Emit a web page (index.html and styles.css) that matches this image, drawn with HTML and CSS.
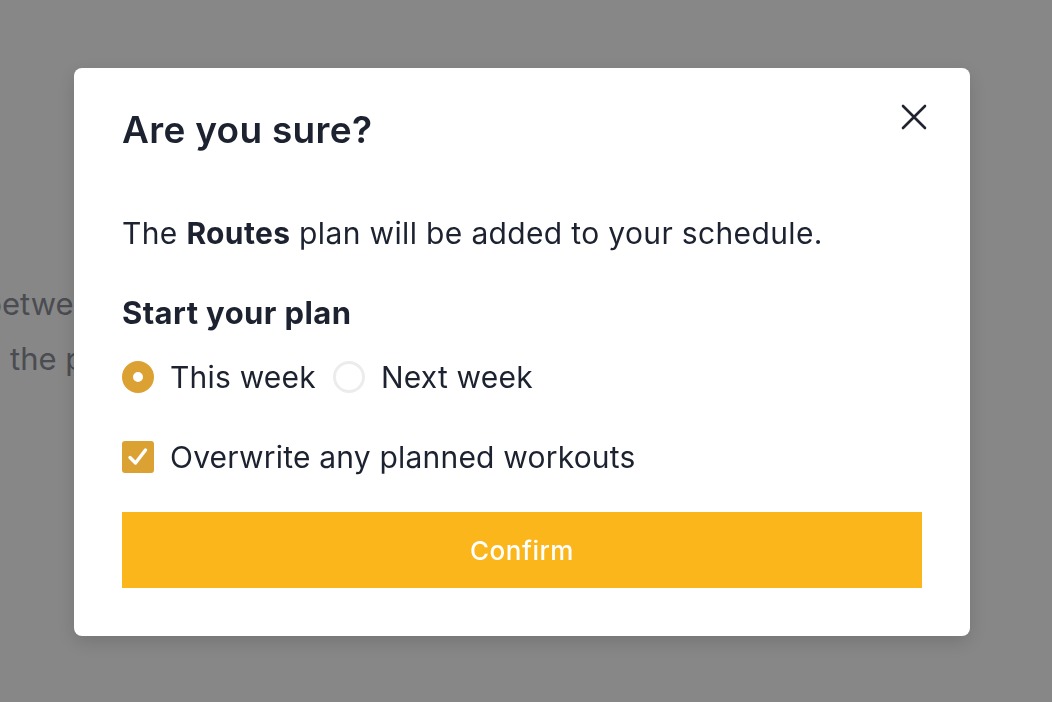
FILE: index.html
```html
<!DOCTYPE html>
<html lang="en">
<head>
    <meta charset="UTF-8">
    <title>Are you sure?</title>
    <link rel="stylesheet" href="styles.css">
</head>
<body>
    <!-- page behind the dialog -->
    <div class="page">
        <p class="page-line first">between</p>
        <p class="page-line">the plan</p>
    </div>

    <div class="overlay">
        <div class="modal">
            <div class="modal-head">
                <h2>Are you sure?</h2>
                <button class="close-btn" aria-label="Close">
                    <svg width="26" height="26" viewBox="0 0 26 26">
                        <path d="M2 2 L24 24 M24 2 L2 24" stroke="#1f2430" stroke-width="2.6" stroke-linecap="round"/>
                    </svg>
                </button>
            </div>

            <p class="summary">The <strong>Routes</strong> plan will be added to your schedule.</p>

            <h3>Start your plan</h3>
            <div class="radio-row">
                <label class="option">
                    <span class="radio checked"></span>
                    This week
                </label>
                <label class="option">
                    <span class="radio"></span>
                    Next week
                </label>
            </div>

            <label class="option check-row">
                <span class="checkbox">
                    <svg width="24" height="24" viewBox="0 0 24 24">
                        <path d="M4 12.5 L9.5 18 L19.5 5" fill="none" stroke="#fff" stroke-width="3.4" stroke-linecap="round" stroke-linejoin="round"/>
                    </svg>
                </span>
                Overwrite any planned workouts
            </label>

            <button class="confirm-btn">Confirm</button>
        </div>
    </div>
</body>
</html>
```

FILE: styles.css
```css
body {
    margin: 0;
    font-family: Inter, "Noto Sans", sans-serif;
    color: #1d2230;
    background: #fff;
    overflow: hidden;
}
.page {
    padding-top: 276px;
}
.page-line {
    margin: 0;
    font-size: 31px;
    line-height: 55px;
    color: #8c9099;
    white-space: nowrap;
    padding-left: 10px;
}
.page-line.first {
    margin-left: -17px;
    padding-left: 0;
}
.overlay {
    position: fixed;
    inset: 0;
    background: rgba(0, 0, 0, 0.47);
}
.modal {
    width: 800px;
    margin: 68px 0 0 74px;
    padding: 40px 48px 48px;
    background: #fff;
    border-radius: 8px;
    box-shadow: 0 6px 20px rgba(0, 0, 0, 0.15);
}
.modal-head {
    display: flex;
    justify-content: space-between;
    align-items: flex-start;
}
h2 {
    margin: 0;
    font-size: 37px;
    font-weight: 600;
    line-height: 44px;
    letter-spacing: 0.3px;
}
.close-btn {
    background: none;
    border: none;
    padding: 0;
    margin: -4px -5px 0 0;
    cursor: pointer;
}
.summary {
    margin: 61px 0 0;
    font-size: 30px;
    line-height: 40px;
    letter-spacing: 0.35px;
}
.summary strong {
    font-weight: 700;
}
h3 {
    margin: 40px 0 0;
    font-size: 31px;
    font-weight: 700;
    line-height: 40px;
    letter-spacing: 0.4px;
}
.radio-row {
    display: flex;
    gap: 17px;
    margin-top: 24px;
}
.option {
    display: flex;
    align-items: center;
    gap: 16px;
    font-size: 30px;
    line-height: 40px;
    letter-spacing: 0.2px;
}
.radio {
    box-sizing: content-box;
    width: 26px;
    height: 26px;
    border: 3px solid #ececec;
    border-radius: 50%;
}
.radio.checked {
    border: 11px solid #dca133;
    width: 10px;
    height: 10px;
}
.check-row {
    margin-top: 40px;
}
.checkbox {
    width: 32px;
    height: 32px;
    border-radius: 3px;
    background: #dca133;
    display: flex;
    align-items: center;
    justify-content: center;
}
.confirm-btn {
    display: block;
    width: 100%;
    height: 76px;
    margin-top: 35px;
    border: none;
    background: #fbb61c;
    color: #fff;
    font-family: inherit;
    font-size: 26px;
    font-weight: 500;
    letter-spacing: 0.5px;
    cursor: pointer;
}
```
